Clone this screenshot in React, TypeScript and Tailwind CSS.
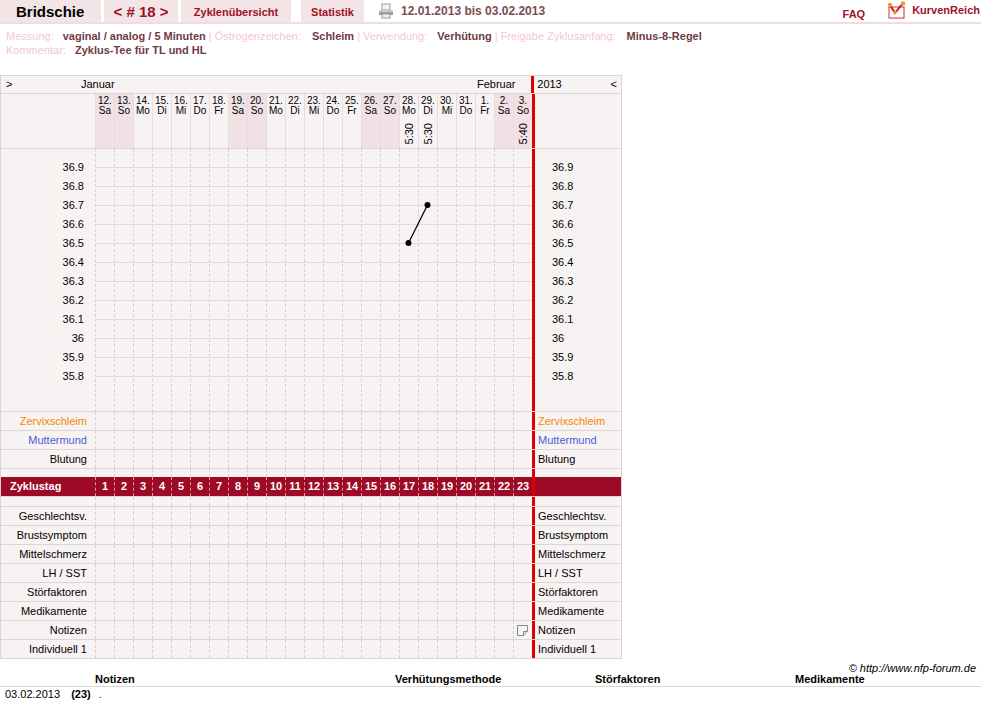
import React from "react";

const days = [
  ["12.", "Sa", 1], ["13.", "So", 1], ["14.", "Mo", 0], ["15.", "Di", 0], ["16.", "Mi", 0], ["17.", "Do", 0], ["18.", "Fr", 0],
  ["19.", "Sa", 1], ["20.", "So", 1], ["21.", "Mo", 0], ["22.", "Di", 0], ["23.", "Mi", 0], ["24.", "Do", 0], ["25.", "Fr", 0],
  ["26.", "Sa", 1], ["27.", "So", 1], ["28.", "Mo", 0], ["29.", "Di", 0], ["30.", "Mi", 0], ["31.", "Do", 0], ["1.", "Fr", 0],
  ["2.", "Sa", 1], ["3.", "So", 1],
] as const;
const times: Record<number, string> = { 16: "5:30", 17: "5:30", 22: "5:40" };
const temps = ["36.9", "36.8", "36.7", "36.6", "36.5", "36.4", "36.3", "36.2", "36.1", "36", "35.9", "35.8"];
const font = { fontFamily: '"Liberation Sans", Arial, sans-serif' };

function DayCells({ h, note }: { h: string; note?: boolean }) {
  return (
    <div className="flex">
      {days.map((_, i) => (
        <div key={i} className={`w-[19px] ${h} border-l border-dashed border-[#d9d2d2] relative`}>
          {note && i === 22 && (
            <svg className="absolute left-[3px] top-[4px]" width="11" height="11" viewBox="0 0 11 11">
              <path d="M0.5 0.5h10v6l-4 4h-6z" fill="#f4f4f4" stroke="#888" />
              <path d="M6.5 10.5v-4h4" fill="#ddd" stroke="#888" />
            </svg>
          )}
        </div>
      ))}
    </div>
  );
}

function Row({ label, color = "text-black", note }: { label: string; color?: string; note?: boolean }) {
  return (
    <div className="flex border-t border-[#ddd5d5] h-[19px]">
      <div className={`w-[95px] text-right pr-[8px] leading-[18px] ${color}`}>{label}</div>
      <DayCells h="h-[18px]" note={note} />
      <div className={`w-[90px] border-l-[3px] border-[#dd0000] pl-[3px] leading-[18px] ${color}`}>{label}</div>
    </div>
  );
}

function Blank({ h }: { h: string }) {
  return (
    <div className={`flex border-t border-[#ddd5d5] ${h}`}>
      <div className="w-[95px]" />
      <DayCells h="h-full" />
      <div className="w-[90px] border-l-[3px] border-[#dd0000]" />
    </div>
  );
}

export default function App() {
  return (
    <div className="w-[981px] h-[718px] bg-white text-[11px] text-black relative" style={font}>
      {/* top tabs */}
      <div className="flex h-[24px] border-b-[2px] border-[#f1dcdf] items-stretch">
        <div className="w-[101px] bg-[#f3e4e6] font-bold text-[15px] pl-[16px] leading-[24px]">Bridschie</div>
        <div className="w-[3px]" />
        <div className="w-[74px] bg-[#f3e4e6] font-bold text-[15px] text-[#a0102a] text-center leading-[24px]">&lt; # 18 &gt;</div>
        <div className="w-[3px]" />
        <div className="w-[110px] bg-[#f3e4e6] font-bold text-[#a0102a] text-center leading-[24px]">Zyklenübersicht</div>
        <div className="w-[10px]" />
        <div className="w-[63px] bg-[#f3e4e6] font-bold text-[#a0102a] text-center leading-[24px]">Statistik</div>
        <div className="flex items-center pl-[14px] gap-[7px]">
          <svg width="16" height="16" viewBox="0 0 16 16">
            <rect x="4" y="1" width="8" height="6" fill="#f5f5f5" stroke="#999" />
            <path d="M1 7h14v5H1z" fill="#9aa0a6" />
            <path d="M1 7h14v2H1z" fill="#c8ccd0" />
            <rect x="4" y="11" width="8" height="4" fill="#eee" stroke="#999" />
          </svg>
          <span className="font-bold text-[12px] text-[#7a4d52]">12.01.2013 bis 03.02.2013</span>
        </div>
        <div className="flex-1" />
        <div className="font-bold text-[#a0102a] leading-[28px] pr-[22px]">FAQ</div>
        <div className="flex items-start pt-[1px] pr-[1px] gap-[5px]">
          <svg width="20" height="18" viewBox="0 0 20 18">
            <rect x="2" y="6" width="15" height="11" fill="#fff" stroke="#c33" strokeWidth="1" />
            <path d="M3 4l5 8 8-10" fill="none" stroke="#c0162e" strokeWidth="2" />
            <circle cx="3" cy="4" r="2.2" fill="#f39a1e" />
            <circle cx="16" cy="2.5" r="2.2" fill="#f39a1e" />
            <circle cx="8" cy="11" r="1.8" fill="#f39a1e" />
          </svg>
          <span className="font-bold text-[#a0102a] leading-[18px]">KurvenReich</span>
        </div>
      </div>

      {/* info */}
      <div className="pl-[6px] pt-[5px] leading-[14px]">
        <div>
          <span className="text-[#f5c8ca]">Messung:</span>
          <span className="font-bold text-[#6e3b44] ml-[9px]">vaginal / analog / 5 Minuten</span>
          <span className="text-[#f5c8ca]"> | Östrogenzeichen:</span>
          <span className="font-bold text-[#6e3b44] ml-[11px]">Schleim</span>
          <span className="text-[#f5c8ca]"> | Verwendung:</span>
          <span className="font-bold text-[#6e3b44] ml-[10px]">Verhütung</span>
          <span className="text-[#f5c8ca]"> | Freigabe Zyklusanfang:</span>
          <span className="font-bold text-[#6e3b44] ml-[11px]">Minus-8-Regel</span>
        </div>
        <div>
          <span className="text-[#f5c8ca]">Kommentar:</span>
          <span className="font-bold text-[#6e3b44] ml-[9px]">Zyklus-Tee für TL und HL</span>
        </div>
      </div>

      {/* chart */}
      <div className="absolute left-0 top-[75px] w-[622px] border border-[#ddd5d5] bg-[#f8f3f3]">
        {/* month row */}
        <div className="flex h-[17px] leading-[17px]">
          <div className="w-[532px] relative">
            <span className="absolute left-[5px]">&gt;</span>
            <span className="absolute left-[80px]">Januar</span>
            <span className="absolute left-[476px]">Februar</span>
          </div>
          <div className="w-[90px] border-l-[3px] border-[#dd0000] pl-[3px] flex justify-between pr-[4px]">
            <span>2013</span><span>&lt;</span>
          </div>
        </div>
        {/* day headers */}
        <div className="flex h-[55px] border-t border-[#ddd5d5]">
          <div className="w-[95px]" />
          <div className="flex">
            {days.map(([d, w, we], i) => (
              <div key={i} className={`w-[19px] h-full border-l border-[#e7dcdc] ${we ? "bg-[#f1e1e4]" : ""} flex flex-col items-center text-[10px] leading-[10px] pt-[2px] relative`}>
                <span>{d}</span>
                <span>{w}</span>
                {times[i] && (
                  <span className="absolute bottom-[4px] left-[4px] [writing-mode:vertical-rl] rotate-180 text-[11px] leading-[11px]">
                    {times[i]}
                  </span>
                )}
              </div>
            ))}
          </div>
          <div className="w-[90px] border-l-[3px] border-[#dd0000]" />
        </div>
        {/* temperature area */}
        <div className="flex h-[263px] border-t border-[#ddd5d5]">
          <div className="w-[95px] relative">
            {temps.map((t, i) => (
              <div key={t} className="absolute right-[11px] leading-[12px]" style={{ top: 12 + i * 19 }}>{t}</div>
            ))}
          </div>
          <div className="relative w-[437px]">
            <DayCells h="h-[263px]" />
            <svg className="absolute inset-0" width="437" height="263">
              {temps.map((t, i) => (
                <line key={t} x1="0" x2="437" y1={18.5 + i * 19} y2={18.5 + i * 19} stroke="#e2dada" />
              ))}
              <line x1="313.5" y1="94" x2="332.5" y2="56" stroke="#000" strokeWidth="1.3" />
              <circle cx="313.5" cy="94" r="3" fill="#000" />
              <circle cx="332.5" cy="56" r="3" fill="#000" />
            </svg>
          </div>
          <div className="w-[90px] border-l-[3px] border-[#dd0000] relative">
            {temps.map((t, i) => (
              <div key={t} className="absolute left-[17px] leading-[12px]" style={{ top: 12 + i * 19 }}>{t}</div>
            ))}
          </div>
        </div>
        <Row label="Zervixschleim" color="text-[#f08a00]" />
        <Row label="Muttermund" color="text-[#4a5fd0]" />
        <Row label="Blutung" />
        <Blank h="h-[9px]" />
        {/* Zyklustag */}
        <div className="flex h-[19px] bg-[#9c0a25] text-white font-bold leading-[19px] text-[11px]">
          <div className="w-[95px] pl-[9px]">Zyklustag</div>
          <div className="flex">
            {days.map((_, i) => (
              <div key={i} className="w-[19px] border-l border-dashed border-[#d99aa5] text-center">{i + 1}</div>
            ))}
          </div>
          <div className="w-[90px] border-l-[3px] border-[#dd0000]" />
        </div>
        <Blank h="h-[10px]" />
        <Row label="Geschlechtsv." />
        <Row label="Brustsymptom" />
        <Row label="Mittelschmerz" />
        <Row label="LH / SST" />
        <Row label="Störfaktoren" />
        <Row label="Medikamente" />
        <Row label="Notizen" note />
        <Row label="Individuell 1" />
      </div>

      {/* footer */}
      <div className="absolute top-[660px] right-[5px] italic text-[11px]">© http://www.nfp-forum.de</div>
      <div className="absolute top-[673px] left-0 w-full h-[14px] border-b border-[#ddd5d5] font-bold leading-[13px]">
        <span className="absolute left-[95px]">Notizen</span>
        <span className="absolute left-[395px]">Verhütungsmethode</span>
        <span className="absolute left-[595px]">Störfaktoren</span>
        <span className="absolute left-[795px]">Medikamente</span>
      </div>
      <div className="absolute top-[688px] left-[5px] leading-[13px]">
        03.02.2013 <span className="font-bold ml-[8px]">(23)</span><span className="ml-[8px]">.</span>
      </div>
    </div>
  );
}
